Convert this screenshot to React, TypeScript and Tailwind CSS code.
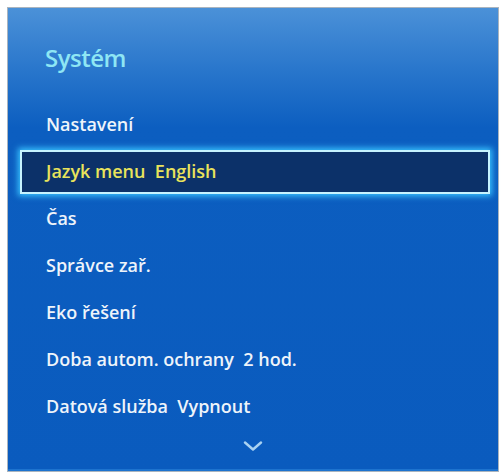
const items = [
  { label: "Nastavení" },
  { label: "Jazyk menu", value: "English", selected: true },
  { label: "Čas" },
  { label: "Správce zař." },
  { label: "Eko řešení" },
  { label: "Doba autom. ochrany", value: "2 hod." },
  { label: "Datová služba", value: "Vypnout" },
];

function MenuRow({ label, value, selected }: { label: string; value?: string; selected?: boolean }) {
  if (selected) {
    return (
      <div className="h-[47px] flex items-center pl-[12px] pr-[8px]">
        <div className="w-full h-[44px] flex items-center pl-[24px] bg-[#0c3169] border-2 border-[#c6f3ff] shadow-[0_0_6px_2px_#39c3ff]">
          <span className="text-[#e9e35b] text-[18px] font-semibold">
            {label}&nbsp;&nbsp;{value}
          </span>
        </div>
      </div>
    );
  }
  return (
    <div className="h-[47px] flex items-center pl-[38px]">
      <span className="text-[#eef4fa] text-[18px] font-semibold">
        {label}
        {value ? <>&nbsp;&nbsp;{value}</> : null}
      </span>
    </div>
  );
}

export default function App() {
  return (
    <div className="w-[504px] h-[476px] bg-white pt-[7px] pl-[7px]" style={{ fontFamily: '"Open Sans", "Noto Sans", sans-serif' }}>
      <div className="w-[492px] h-[465px] border border-[#aab4be] bg-[linear-gradient(to_bottom,#4b91d8_0px,#2a77cc_60px,#0c5ec0_120px,#0a5bbe_100%)] flex flex-col">
        <div className="h-[93px] pl-[37px] pt-[38px]">
          <span className="text-[#8ee6f4] text-[24px] leading-none font-semibold tracking-[-0.5px]">Systém</span>
        </div>
        {items.map((it) => (
          <MenuRow key={it.label} {...it} />
          ))}
        <div className="flex-1 flex justify-center pt-[11px] border-b-2 border-[#1d73cf]">
          <svg width="20" height="10" viewBox="0 0 20 10" fill="none">
            <path d="M2 1.5 L10 8.5 L18 1.5" stroke="#a9d2f2" strokeWidth="2.4" strokeLinecap="round" strokeLinejoin="round" />
          </svg>
        </div>
      </div>
    </div>
  );
}
